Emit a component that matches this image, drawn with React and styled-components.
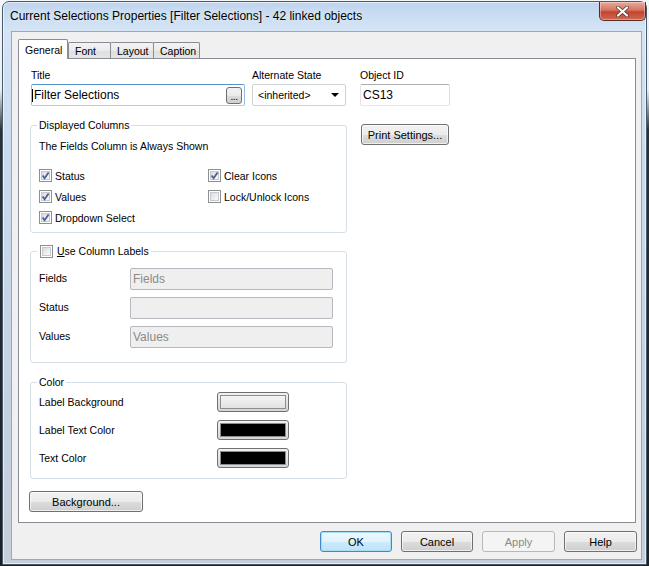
import React from 'react';
import styled, { createGlobalStyle } from 'styled-components';

const GlobalStyle = createGlobalStyle`
  html, body { margin: 0; padding: 0; }
  body {
    width: 649px;
    height: 566px;
    overflow: hidden;
    background: linear-gradient(to bottom, #f4f7fa 0, #e8eef4 90px, #2b3138 130px, #1c2126 100%);
    font-family: "Liberation Sans", Arial, sans-serif;
    font-size: 10.5px;
    color: #000;
  }
`;

const Window = styled.div`
  box-sizing: border-box;
  width: 645px;
  height: 564px;
  margin: 1px 0 0 2px;
  border: 1px solid #4a5a6c;
  border-radius: 7px 7px 0 0;
  background: linear-gradient(to bottom, #bfd5ee 0, #d4e4f5 28px, #c9dbee 140px, #c3d2e2 70%, #c6cfd9 100%);
  box-shadow: inset 0 0 0 1px rgba(255, 255, 255, 0.6);
  display: flex;
  flex-direction: column;
  padding: 0 4px 4px 8px;
`;

const TitleBar = styled.div`
  height: 29px;
  display: flex;
  align-items: flex-start;
`;

const Caption = styled.div`
  margin: 7px 0 0 -1px;
  font-size: 12px;
  line-height: 15px;
  color: #000;
  text-shadow: 0 0 6px rgba(255, 255, 255, 0.9);
`;

const CloseButton = styled.div`
  box-sizing: border-box;
  width: 47px;
  height: 19px;
  margin: 0 -4px 0 auto;
  border: 1px solid #5b2a22;
  border-top: none;
  border-radius: 0 0 5px 5px;
  background: linear-gradient(to bottom, #e9a99b 0%, #d7735f 45%, #c24430 55%, #cf6a4f 100%);
  box-shadow: inset 0 0 0 1px rgba(255, 255, 255, 0.35);
  display: flex;
  align-items: center;
  justify-content: center;
`;

const Client = styled.div`
  flex: 1;
  display: flex;
  flex-direction: column;
  border: 1px solid #98a9bb;
  background: #f0f0f0;
  padding: 7px 5px 7px 6px;
  min-height: 0;
`;

const TabBar = styled.div`
  display: flex;
  align-items: flex-end;
  height: 19px;
  position: relative;
  z-index: 1;
`;

const Tab = styled.div`
  box-sizing: border-box;
  width: ${p => p.$w}px;
  height: ${p => (p.$active ? 20 : 16)}px;
  margin-bottom: ${p => (p.$active ? -1 : 0)}px;
  margin-left: ${p => (p.$join ? -1 : 0)}px;
  padding: ${p => (p.$active ? 3 : 1)}px 0 0 6px;
  border: 1px solid #898c95;
  border-bottom: none;
  border-radius: 2px 2px 0 0;
  background: ${p => (p.$active ? '#fff' : 'linear-gradient(to bottom, #f3f3f3 0%, #ebebeb 50%, #dedede 51%, #e6e6e6 100%)')};
  line-height: 14px;
  white-space: nowrap;
`;

const Panel = styled.div`
  flex: 1;
  display: flex;
  border: 1px solid #898c95;
  background: #fff;
  padding: 9px 0 0 11px;
`;

const LeftCol = styled.div`
  width: 317px;
  display: flex;
  flex-direction: column;
`;

const RightCol = styled.div`
  margin-left: 13px;
  display: flex;
  flex-direction: column;
  align-items: flex-start;
`;

const TopRow = styled.div`
  display: flex;
  gap: 7px;
  margin-left: 1px;
`;

const Field = styled.div`
  display: flex;
  flex-direction: column;
`;

const Label = styled.div`
  line-height: 14px;
  height: 14px;
  margin-bottom: 2px;
  white-space: nowrap;
`;

const TextBox = styled.div`
  box-sizing: border-box;
  width: ${p => p.$w}px;
  height: 22px;
  display: flex;
  align-items: center;
  border: 1px solid;
  border-color: ${p => (p.$focus ? '#5b93cf #8fbbe6 #a9cdef #8fbbe6' : '#abadb3 #dbdfe6 #e3e9ef #e2e3ea')};
  border-radius: 2px;
  background: #fff;
  padding: 0 2px 0 ${p => (p.$focus ? 0 : 2)}px;
  font-size: 12px;
  white-space: nowrap;
`;

const Caret = styled.span`
  width: 1px;
  height: 13px;
  background: #000;
  margin-right: 1px;
`;

const DotsButton = styled.div`
  box-sizing: border-box;
  width: 16px;
  height: 17px;
  margin-left: auto;
  border: 1px solid #707070;
  border-radius: 3px;
  background: linear-gradient(to bottom, #f2f2f2 0%, #ebebeb 50%, #dddddd 51%, #cfcfcf 100%);
  font-size: 10px;
  line-height: 18px;
  text-align: center;
  letter-spacing: -0.5px;
`;

const Select = styled.div`
  box-sizing: border-box;
  width: 94px;
  height: 22px;
  display: flex;
  align-items: center;
  border: 1px solid #cfd3d8;
  border-radius: 2px;
  background: #fff;
  padding: 0 6px 0 5px;
`;

const Arrow = styled.span`
  margin-left: auto;
  width: 0;
  height: 0;
  border-left: 4px solid transparent;
  border-right: 4px solid transparent;
  border-top: 4px solid #000;
`;

const Group = styled.fieldset`
  margin: ${p => p.$top}px 0 0 0;
  padding: 0 8px ${p => p.$bottom}px 8px;
  border: 1px solid #d5dfe5;
  border-radius: 3px;
  min-width: 0;
`;

const Legend = styled.legend`
  padding: 0 2px;
  margin-left: -2px;
  line-height: 14px;
  display: flex;
  align-items: center;
`;

const Note = styled.div`
  margin-top: 7px;
  line-height: 14px;
`;

const CheckGrid = styled.div`
  margin-top: 12px;
  display: grid;
  grid-template-columns: 169px 1fr;
  grid-auto-rows: 21px;
`;

const CheckRow = styled.label`
  display: flex;
  align-items: center;
  white-space: nowrap;
`;

const Box = styled.span`
  box-sizing: border-box;
  width: 13px;
  height: 13px;
  margin: 0 ${p => p.$gap || 3}px 0 ${p => p.$left || 0}px;
  border: 1px solid #8e8f8f;
  background: #fff;
  padding: 1px;
  display: flex;
  flex-shrink: 0;
`;

const BoxInner = styled.span`
  flex: 1;
  position: relative;
  border: 1px solid #c6c9cd;
  background: linear-gradient(135deg, #d7dade 0%, #eeeff1 60%, #f7f7f8 100%);
`;

const CheckMark = styled.svg`
  position: absolute;
  left: -2px;
  top: -2px;
`;

const Underline = styled.span`
  text-decoration: underline;
`;

const FieldGrid = styled.div`
  margin-top: 10px;
  display: grid;
  grid-template-columns: 91px 203px;
  grid-auto-rows: 22px;
  row-gap: 7px;
  align-items: center;
`;

const RowLabel = styled.div`
  margin-top: ${p => (p.$raise ? -3 : 0)}px;
  white-space: nowrap;
`;

const DisabledBox = styled.div`
  box-sizing: border-box;
  height: 22px;
  border: 1px solid #b5b9bf;
  border-radius: 2px;
  background: #efefef;
  color: #8a8a8a;
  font-size: 12px;
  line-height: 20px;
  padding-left: 2px;
`;

const ColorGrid = styled.div`
  margin-top: 3px;
  display: grid;
  grid-template-columns: 178px 72px;
  grid-auto-rows: 20px;
  row-gap: 8px;
  align-items: center;
`;

const Swatch = styled.div`
  box-sizing: border-box;
  width: 72px;
  height: 20px;
  border: 1px solid #6f6f6f;
  border-radius: 3px;
  background: linear-gradient(to bottom, #f2f2f2, #d6d6d6);
  padding: 2px;
  display: flex;
`;

const SwatchFill = styled.div`
  flex: 1;
  border: 1px solid #8d8d8d;
  background: ${p => p.$color};
`;

const Button = styled.div`
  box-sizing: border-box;
  width: ${p => p.$w}px;
  height: 21px;
  flex-shrink: 0;
  border: 1px solid #707070;
  border-radius: 3px;
  background: linear-gradient(to bottom, #f2f2f2 0%, #ebebeb 50%, #dddddd 51%, #cfcfcf 100%);
  box-shadow: inset 0 0 0 1px rgba(255, 255, 255, 0.65);
  display: flex;
  align-items: center;
  justify-content: center;
  font-size: 11px;
  color: #000;
  white-space: nowrap;
  margin: ${p => p.$m || '0'};

  &[data-default] {
    border-color: #3c8ccd;
    background: linear-gradient(to bottom, #eef8fe 0%, #e0f3fd 50%, #cdebfc 51%, #bfe3f8 100%);
    box-shadow: inset 0 0 0 1px #a8ddf8;
  }

  &[data-disabled] {
    border-color: #b5b9bc;
    background: #f4f4f4;
    box-shadow: none;
    color: #8a8a8a;
  }
`;

const Footer = styled.div`
  display: flex;
  justify-content: flex-end;
  gap: 9px;
  margin: 8px -1px 0 0;
`;

function Check({ checked, gap, left }) {
  return (
    <Box $gap={gap} $left={left}>
      <BoxInner>
        {checked && (
          <CheckMark width="11" height="11" viewBox="0 0 11 11">
            <path d="M2.6 5.4 L4.6 8.2 L8.6 2.6" fill="none" stroke="#4a5f97" strokeWidth="1.8" />
          </CheckMark>
        )}
      </BoxInner>
    </Box>
  );
}

export default function App() {
  return (
    <>
      <GlobalStyle />
      <Window>
        <TitleBar>
          <Caption>Current Selections Properties [Filter Selections] - 42 linked objects</Caption>
          <CloseButton>
            <svg width="13" height="11" viewBox="0 0 13 11">
              <path d="M2 1.5 L11 9.5 M11 1.5 L2 9.5" stroke="#3b3b3b" strokeWidth="3.6" strokeLinecap="round" />
              <path d="M2 1.5 L11 9.5 M11 1.5 L2 9.5" stroke="#fff" strokeWidth="2.2" strokeLinecap="round" />
            </svg>
          </CloseButton>
        </TitleBar>
        <Client>
          <TabBar>
            <Tab $w={50} $active>General</Tab>
            <Tab $w={43}>Font</Tab>
            <Tab $w={44} $join>Layout</Tab>
            <Tab $w={47} $join>Caption</Tab>
          </TabBar>
          <Panel>
            <LeftCol>
              <TopRow>
                <Field>
                  <Label>Title</Label>
                  <TextBox $w={214} $focus>
                    <Caret />
                    Filter Selections
                    <DotsButton>...</DotsButton>
                  </TextBox>
                </Field>
                <Field>
                  <Label>Alternate State</Label>
                  <Select>
                    &lt;inherited&gt;
                    <Arrow />
                  </Select>
                </Field>
              </TopRow>

              <Group $top={12} $bottom={4}>
                <Legend>Displayed Columns</Legend>
                <Note>The Fields Column is Always Shown</Note>
                <CheckGrid>
                  <CheckRow><Check checked />Status</CheckRow>
                  <CheckRow><Check checked />Clear Icons</CheckRow>
                  <CheckRow><Check checked />Values</CheckRow>
                  <CheckRow><Check />Lock/Unlock Icons</CheckRow>
                  <CheckRow><Check checked />Dropdown Select</CheckRow>
                </CheckGrid>
              </Group>

              <Group $top={11} $bottom={14}>
                <Legend>
                  <Check left={1} gap={4} />
                  <span><Underline>U</Underline>se Column Labels</span>
                </Legend>
                <FieldGrid>
                  <RowLabel $raise>Fields</RowLabel>
                  <DisabledBox>Fields</DisabledBox>
                  <RowLabel $raise>Status</RowLabel>
                  <DisabledBox />
                  <RowLabel $raise>Values</RowLabel>
                  <DisabledBox>Values</DisabledBox>
                </FieldGrid>
              </Group>

              <Group $top={12} $bottom={10}>
                <Legend>Color</Legend>
                <ColorGrid>
                  <RowLabel>Label Background</RowLabel>
                  <Swatch><SwatchFill $color="linear-gradient(to bottom, #f4f4f4, #e2e2e2)" /></Swatch>
                  <RowLabel>Label Text Color</RowLabel>
                  <Swatch><SwatchFill $color="#000" /></Swatch>
                  <RowLabel>Text Color</RowLabel>
                  <Swatch><SwatchFill $color="#000" /></Swatch>
                </ColorGrid>
              </Group>

              <Button $w={114} $m="12px 0 0 -1px">Background...</Button>
            </LeftCol>

            <RightCol>
              <Field>
                <Label>Object ID</Label>
                <TextBox $w={90}>CS13</TextBox>
              </Field>
              <Button $w={88} $m="18px 0 0 1px">Print Settings...</Button>
            </RightCol>
          </Panel>
          <Footer>
            <Button $w={72} data-default="">OK</Button>
            <Button $w={72}>Cancel</Button>
            <Button $w={73} data-disabled="">Apply</Button>
            <Button $w={73}>Help</Button>
          </Footer>
        </Client>
      </Window>
    </>
  );
}
